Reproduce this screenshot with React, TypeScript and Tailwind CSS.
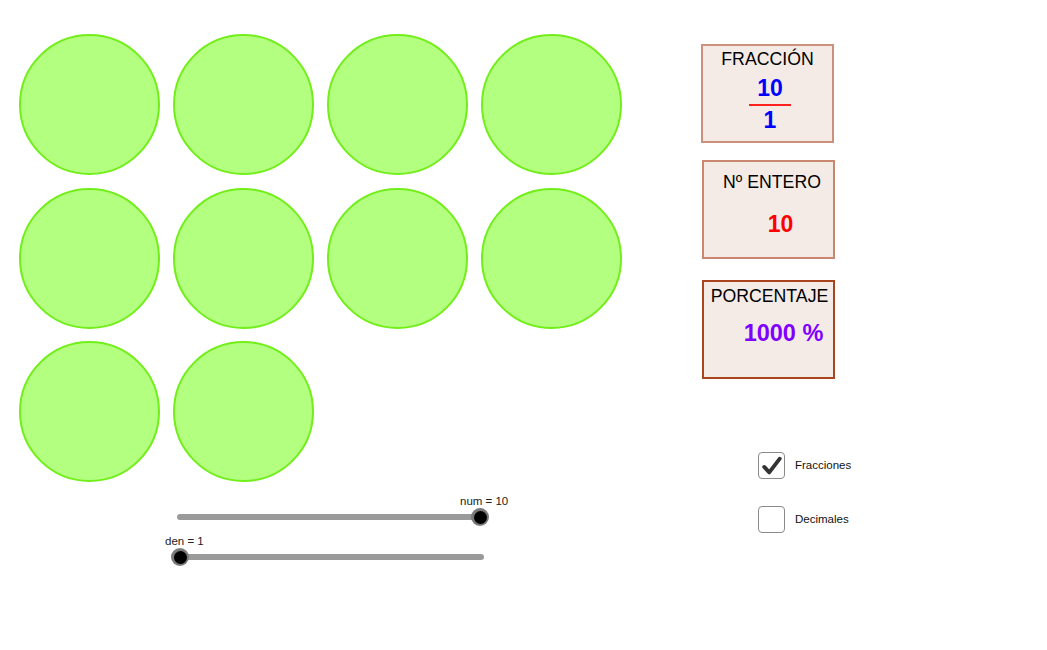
const font = { fontFamily: '"Liberation Sans", Arial, sans-serif' };

function Circle() {
  return <div className="h-[141px] w-[141px] rounded-full border-2 border-[#72ee1a] bg-[#b3ff80]" />;
}

function Panel({ top, border, children }: { top: string; border: string; children: React.ReactNode }) {
  return (
    <div className={`${top} ${border} h-[99px] w-[133px] border-2 bg-[#f4ebe6] flex flex-col items-center`}>
      {children}
    </div>
  );
}

function Slider({ label, value, labelLeft }: { label: string; value: number; labelLeft: string }) {
  // value 0..1 along the track
  return (
    <div className="relative h-[38px] w-[310px]">
      <span className={`absolute top-0 ${labelLeft} whitespace-nowrap text-[11.5px] text-[#222] leading-none`}>{label}</span>
      <div className="absolute left-[3px] top-[18px] h-[6px] w-[307px] rounded-full bg-[#9a9a9a]" />
      <div
        className="absolute top-[12px] h-[18px] w-[18px] -translate-x-1/2 rounded-full bg-[#7a7a7a] flex items-center justify-center"
        style={{ left: `${6 + value * 300}px` }}
      >
        <div className="h-[13px] w-[13px] rounded-full bg-black" />
      </div>
    </div>
  );
}

function Check({ checked, label }: { checked: boolean; label: string }) {
  return (
    <div className="flex items-center gap-[10px]">
      <div className="h-[27px] w-[27px] rounded-[4px] border-[1.5px] border-[#8a8a8a] bg-white flex items-center justify-center">
        {checked && (
          <svg width="22" height="22" viewBox="0 0 24 24">
            <path d="M3.5 13 L9 19 L20.5 4" fill="none" stroke="#333" strokeWidth="4.2" strokeLinecap="round" strokeLinejoin="round" />
          </svg>
        )}
      </div>
      <span className="text-[11.5px] text-[#111]">{label}</span>
    </div>
  );
}

export default function App() {
  return (
    <div className="relative h-[650px] w-[1047px] bg-white overflow-hidden" style={font}>
      <div className="absolute left-[19px] top-[34px] grid grid-cols-[repeat(4,141px)] gap-x-[13px] gap-y-[12.5px]">
        {Array.from({ length: 10 }).map((_, i) => (
          <Circle key={i} />
        ))}
      </div>

      <div className="absolute left-[174px] top-[496px] flex flex-col gap-[2px]">
        <Slider label="num = 10" value={1} labelLeft="left-[286px]" />
        <Slider label="den = 1" value={0} labelLeft="left-[-9px]" />
      </div>

      <div className="absolute left-[701px] top-[44px] flex flex-col">
        <Panel top="" border="border-[#cc917c]">
          <div className="mt-[2px] text-[17.7px] text-black leading-[22px]">FRACCIÓN</div>
          <div className="mt-[8px] ml-[5px] flex flex-col items-center">
            <span className="text-[23px] font-bold text-[#0000ff] leading-[20px]">10</span>
            <div className="mt-[6px] h-[2px] w-[42px] bg-[#ff2020]" />
            <span className="mt-[3px] text-[23px] font-bold text-[#0000ff] leading-[22px]">1</span>
          </div>
        </Panel>
        <Panel top="mt-[17px] ml-[1px]" border="border-[#c9876f]">
          <div className="mt-[9px] ml-[7px] text-[17.7px] text-black leading-[22px]">Nº ENTERO</div>
          <div className="mt-[18px] ml-[24px] text-[23px] font-bold text-[#ff0000] leading-[26px]">10</div>
        </Panel>
        <Panel top="mt-[21px] ml-[1px]" border="border-[#a8451f]">
          <div className="mt-[3px] ml-[2px] text-[17.7px] text-black leading-[22px]">PORCENTAJE</div>
          <div className="mt-[13px] ml-[30px] text-[23.5px] font-bold text-[#8000ff] leading-[26px]">1000 %</div>
        </Panel>
      </div>

      <div className="absolute left-[758px] top-[452px] flex flex-col gap-[27px]">
        <Check checked label="Fracciones" />
        <Check checked={false} label="Decimales" />
      </div>
    </div>
  );
}
